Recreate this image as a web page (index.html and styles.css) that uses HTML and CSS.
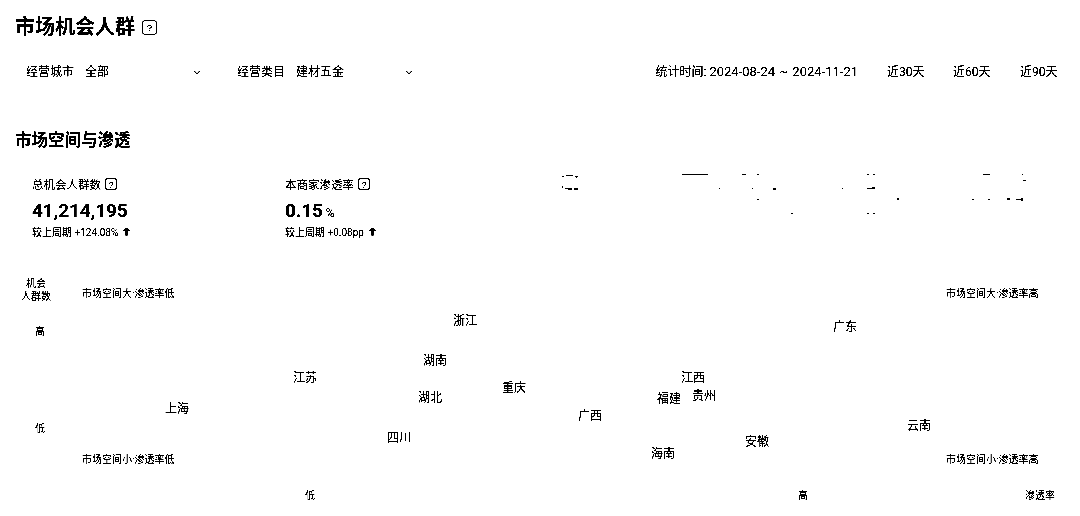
FILE: index.html
```html
<!DOCTYPE html>
<html lang="zh">
<head>
<meta charset="utf-8">
<title>市场机会人群</title>
<link rel="stylesheet" href="styles.css">
</head>
<body>
<main class="page">
  <header class="title-row">
    <h1 class="title">市场机会人群</h1>
    <svg class="help help-lg" viewBox="0 0 14 14"><rect x="0.5" y="0.5" width="13" height="13" rx="3"/><text x="7" y="10.5">?</text></svg>
  </header>

  <section class="filters">
    <div class="select select-city"><span class="select-label">经营城市</span><span class="select-value">全部</span><svg class="chev" viewBox="0 0 8 5"><path d="M1 1l3 3 3-3"/></svg></div>
    <div class="select select-cat"><span class="select-label">经营类目</span><span class="select-value">建材五金</span><svg class="chev" viewBox="0 0 8 5"><path d="M1 1l3 3 3-3"/></svg></div>
    <div class="range">
      <span class="range-text">统计时间: <span class="range-date">2024-08-24 ~ 2024-11-21</span></span>
      <span class="range-btn">近30天</span>
      <span class="range-btn">近60天</span>
      <span class="range-btn">近90天</span>
    </div>
  </section>

  <h2 class="section-title">市场空间与渗透</h2>

  <section class="metrics">
    <div class="metric metric-a">
      <div class="metric-label">总机会人群数<svg class="help" viewBox="0 0 12 12"><rect x="0.5" y="0.5" width="11" height="11" rx="2"/><text x="6" y="9.5">?</text></svg></div>
      <div class="metric-value">41,214,195</div>
      <div class="metric-delta">较上周期 +124.08%<svg class="up" viewBox="0 0 8 9"><path d="M4 0l4 4H5.5v5h-3V4H0z"/></svg></div>
    </div>
    <div class="metric">
      <div class="metric-label">本商家渗透率<svg class="help" viewBox="0 0 12 12"><rect x="0.5" y="0.5" width="11" height="11" rx="2"/><text x="6" y="9.5">?</text></svg></div>
      <div class="metric-value">0.15<span class="unit">%</span></div>
      <div class="metric-delta">较上周期 +0.08pp<svg class="up" viewBox="0 0 8 9"><path d="M4 0l4 4H5.5v5h-3V4H0z"/></svg></div>
    </div>
  </section>

  <section class="chart">
    <span class="axis y-title">机会<br>人群数</span>
    <span class="axis y-high">高</span>
    <span class="axis y-low">低</span>
    <span class="axis x-low">低</span>
    <span class="axis x-high">高</span>
    <span class="axis x-title">渗透率</span>
    <span class="quad q1">市场空间大·渗透率低</span>
    <span class="quad q2">市场空间大·渗透率高</span>
    <span class="quad q3">市场空间小·渗透率低</span>
    <span class="quad q4">市场空间小·渗透率高</span>
    <span class="node" style="left:465px;top:45px">浙江</span>
    <span class="node" style="left:845px;top:51px">广东</span>
    <span class="node" style="left:435px;top:85px">湖南</span>
    <span class="node" style="left:305px;top:102px">江苏</span>
    <span class="node" style="left:693px;top:102px">江西</span>
    <span class="node" style="left:514px;top:112px">重庆</span>
    <span class="node" style="left:430px;top:122px">湖北</span>
    <span class="node" style="left:704px;top:120px">贵州</span>
    <span class="node" style="left:669px;top:123px">福建</span>
    <span class="node" style="left:177px;top:133px">上海</span>
    <span class="node" style="left:590px;top:140px">广西</span>
    <span class="node" style="left:399px;top:162px">四川</span>
    <span class="node" style="left:757px;top:166px">安徽</span>
    <span class="node" style="left:919px;top:150px">云南</span>
    <span class="node" style="left:663px;top:178px">海南</span>
  </section>

  <svg class="residue" viewBox="0 0 1080 516" aria-hidden="true"><path d="M562 176h2v1h-2zM566 175h7v1h-7zM575 176h3v1h-3zM576 177h1v1h-1zM562 186h1v2h-1zM565 188h7v1h-7zM568 189h4v1h-4zM574 188h4v2h-4zM682 174h26v1h-26zM719 188h1v1h-1zM742 174h4v1h-4zM757 174h2v1h-2zM752 188h1v1h-1zM773 188h3v2h-3zM757 199h2v1h-2zM791 213h2v1h-2zM867 174h2v1h-2zM873 174h2v1h-2zM842 188h1v1h-1zM867 188h8v1h-8zM872 187h3v2h-3zM867 213h2v1h-2zM873 213h2v1h-2zM983 174h7v1h-7zM1022 174h1v1h-1zM1023 180h3v1h-3zM897 198h2v2h-2zM972 199h2v1h-2zM988 199h2v1h-2zM1007 198h3v2h-3zM1016 199h7v1h-7zM1021 198h2v3h-2z"/></svg>
</main>
</body>
</html>
```
FILE: styles.css
```css
* { box-sizing: border-box; }
html, body { margin: 0; background: #fff; }
body {
  width: 1080px;
  height: 516px;
  overflow: hidden;
  color: #000;
  font-family: "Roboto", "Noto Sans CJK SC", sans-serif;
}
.page { position: relative; filter: grayscale(1) brightness(.8) contrast(8) brightness(1.5); background: #fff; height: 516px; padding: 14px 23px 0 15px; }
.title-row { display: flex; align-items: center; gap: 7px; height: 26px; }
.title { margin: 0; font-size: 20px; line-height: 26px; font-weight: 700; }
.help { fill: none; stroke: #000; stroke-width: 1; width: 12px; height: 12px; margin-left: 4px; vertical-align: -1px; }
.help-lg { width: 15px; height: 15px; margin-left: 0; }
.help text { fill: #000; stroke: none; font-size: 9px; text-anchor: middle; font-family: "Liberation Sans", sans-serif; }
.filters { display: flex; align-items: center; height: 20px; margin-top: 22px; font-size: 12px; line-height: 20px; }
.select { display: flex; align-items: center; }
.select-city { width: 175px; margin-left: 11px; }
.select-cat { width: 176px; margin-left: 36px; }
.select-label { width: 48px; }
.select-value { margin-left: 11px; flex: 1; }
.chev { width: 8px; height: 5px; fill: none; stroke: #000; stroke-width: 1.1; }
.range { margin-left: auto; display: flex; align-items: center; }
.range-date { font-size: 13px; word-spacing: 1px; }
.range-btn { margin-left: 29px; width: 37px; white-space: nowrap; }
.range-btn:last-child { margin-left: 30px; }
.section-title { margin: 48px 0 0; font-size: 16.5px; line-height: 22px; font-weight: 700; }
.metrics { display: flex; height: 64px; margin-top: 24px; padding-left: 17px; }
.metric-a { width: 253px; }
.metric-label { font-size: 11.5px; line-height: 18px; height: 18px; }
.metric-value { font-weight: 700; font-size: 19px; line-height: 24px; height: 24px; letter-spacing: -.1px; margin-top: 5px; }
.unit { font-size: 12px; line-height: 10px; font-weight: 400; margin-left: 3px; letter-spacing: 0; }
.metric-delta { font-size: 10px; line-height: 14px; margin-top: 3px; }
.up { width: 7px; height: 9px; margin-left: 5px; fill: #000; }
.chart { position: relative; height: 248px; margin: 28px -23px 0 -15px; width: 1080px; }
.axis, .quad { position: absolute; font-size: 10px; line-height: 13px; white-space: nowrap; }
.y-title { left: 16px; top: 9px; width: 40px; text-align: center; }
.y-high { left: 35px; top: 57px; }
.y-low { left: 35px; top: 154px; }
.x-low { left: 305px; top: 221px; }
.x-high { left: 798px; top: 221px; }
.x-title { left: 1025px; top: 221px; }
.q1 { left: 82px; top: 19px; }
.q2 { left: 946px; top: 19px; }
.q3 { left: 82px; top: 185px; }
.q4 { left: 946px; top: 185px; }
.node { position: absolute; font-size: 12px; line-height: 16px; transform: translateX(-50%); white-space: nowrap; }
.residue { position: absolute; left: 0; top: 0; width: 1080px; height: 516px; fill: #000; shape-rendering: crispEdges; pointer-events: none; }
```
